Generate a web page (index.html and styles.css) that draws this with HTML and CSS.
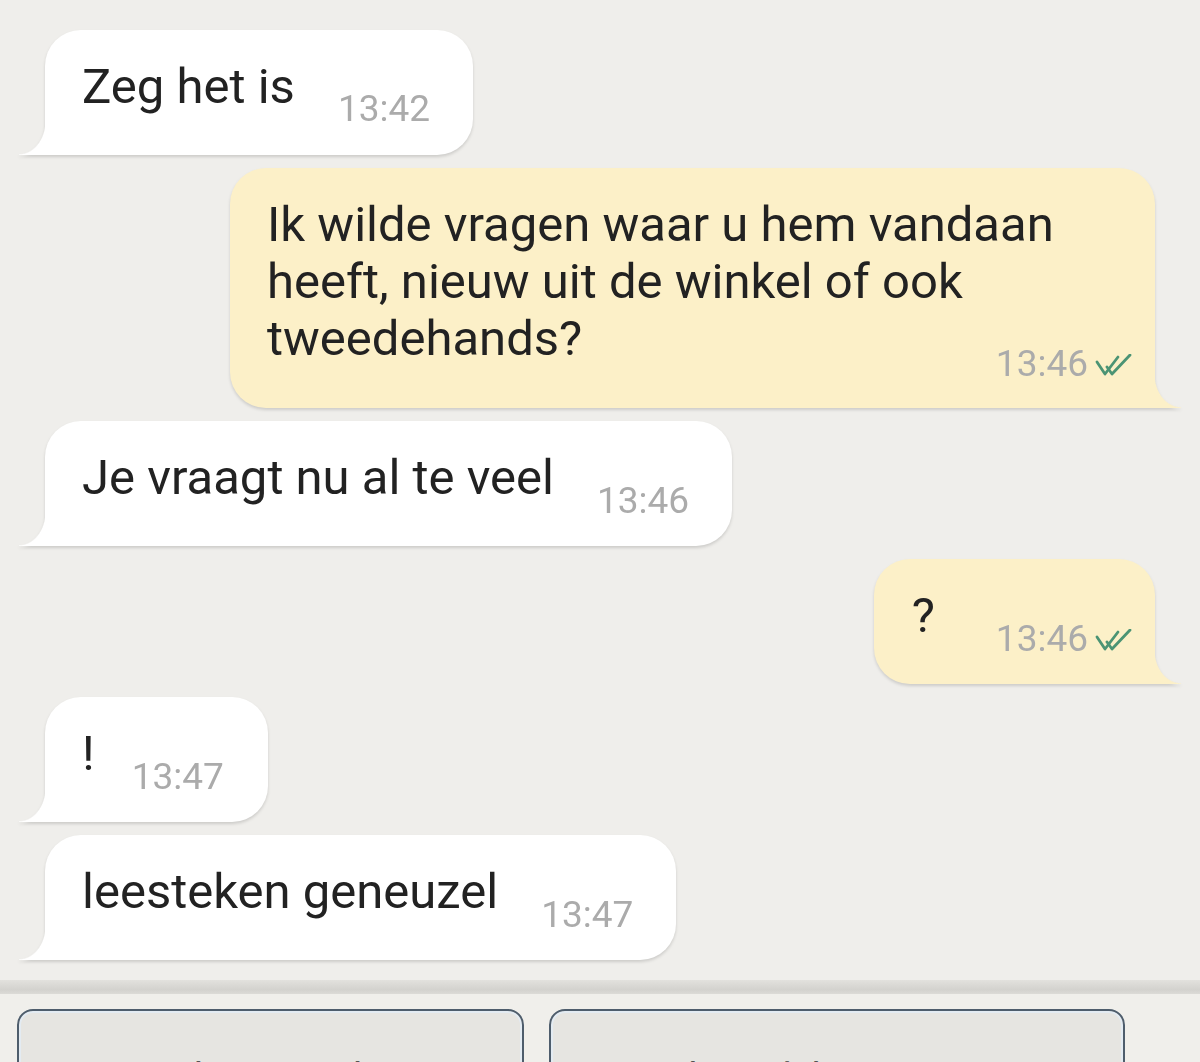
FILE: index.html
```html
<!DOCTYPE html>
<html lang="nl">
<head>
<meta charset="utf-8">
<title>Chat</title>
<link rel="stylesheet" href="styles.css">
</head>
<body>
<div class="screen">
  <main class="chat">
    <div class="bubble bubble--in">
      <span class="text">Zeg het is</span>
      <span class="time">13:42</span>
    </div>
    <div class="bubble bubble--out bubble--multi">
      <p class="text text--flow">Ik wilde vragen waar u hem vandaan heeft, nieuw uit de winkel of ook tweedehands?<span class="time time--float">13:46<svg class="ticks" viewBox="0 0 40 22" width="40" height="22" aria-hidden="true"><path d="M2 8 L10 20 L23 3" /><path d="M12 13 L17 20 L35 1" /></svg></span></p>
    </div>
    <div class="bubble bubble--in">
      <span class="text">Je vraagt nu al te veel</span>
      <span class="time">13:46</span>
    </div>
    <div class="bubble bubble--out bubble--short">
      <span class="text">?</span>
      <span class="time">13:46<svg class="ticks" viewBox="0 0 40 22" width="40" height="22" aria-hidden="true"><path d="M2 8 L10 20 L23 3" /><path d="M12 13 L17 20 L35 1" /></svg></span>
    </div>
    <div class="bubble bubble--in bubble--tiny">
      <span class="text">!</span>
      <span class="time">13:47</span>
    </div>
    <div class="bubble bubble--in">
      <span class="text">leesteken geneuzel</span>
      <span class="time">13:47</span>
    </div>
  </main>
  <div class="divider"></div>
  <footer class="replies">
    <button class="reply reply--left">Nee, dat weet ik niet</button>
    <button class="reply reply--right">Ja, dat wil ik graag weten</button>
  </footer>
</div>
</body>
</html>
```

FILE: styles.css
```css
html, body {
  margin: 0;
  padding: 0;
}

body {
  background: #efeeeb;
  font-family: Roboto, "Noto Sans", "Liberation Sans", sans-serif;
  color: #222222;
}

.screen {
  width: 1200px;
  height: 1062px;
  overflow: hidden;
  display: flex;
  flex-direction: column;
}

.chat {
  display: flex;
  flex-direction: column;
  gap: 13px;
  padding: 30px 0 0;
  height: 950px;
  box-sizing: border-box;
  flex: none;
}

.bubble {
  position: relative;
  display: flex;
  align-items: flex-end;
  gap: 43px;
  padding: 28px 43px 25.6px 37px;
  border-radius: 36px;
  filter: drop-shadow(0 2px 1.5px rgba(0, 0, 0, 0.14));
}

.bubble::before {
  content: "";
  position: absolute;
  bottom: 0;
  width: 27px;
  height: 34px;
}

.bubble--in {
  align-self: flex-start;
  margin-left: 45px;
  background: #ffffff;
  border-bottom-left-radius: 0;
}

.bubble--in::before {
  left: -26px;
  background: radial-gradient(ellipse 27px 34px at 0 0, rgba(255, 255, 255, 0) 96%, #ffffff 100%);
}

.bubble--out {
  align-self: flex-end;
  margin-right: 45px;
  background: #fcf0c8;
  border-bottom-right-radius: 0;
  padding-right: 20px;
}

.bubble--out::before {
  right: -26px;
  background: radial-gradient(ellipse 27px 34px at 100% 0, rgba(252, 240, 200, 0) 96%, #fcf0c8 100%);
}

.bubble--short {
  padding-left: 38px;
  gap: 61px;
}

.bubble--tiny {
  padding-left: 37px;
  gap: 37px;
  padding-right: 44px;
}

.text {
  font-size: 49px;
  line-height: 57px;
  margin-bottom: 14.4px;
  color: #222222;
}

.time {
  display: flex;
  align-items: center;
  font-size: 37px;
  line-height: 40px;
  color: #ababab;
  white-space: nowrap;
}

.bubble--multi {
  display: block;
  width: 925px;
  box-sizing: border-box;
  padding-bottom: 24px;
}

.bubble--multi .text--flow {
  display: flow-root;
  margin: 0;
}

.bubble--multi .time--float {
  float: right;
  margin-top: 34.4px;
}

.ticks {
  margin-left: 7px;
  margin-top: 2px;
  fill: none;
  stroke: #4b9474;
  stroke-width: 2.8;
  stroke-linecap: round;
  stroke-linejoin: round;
}

.divider {
  height: 14px;
  margin-top: 30px;
  background: linear-gradient(to bottom, #e2e1dd 0%, #d3d2ce 70%, #dcdbd7 100%);
  flex: none;
}

.replies {
  display: flex;
  gap: 25px;
  padding: 15px 0 0 17px;
  background: #f0efeb;
  flex: none;
}

.reply {
  height: 120px;
  border: 2.5px solid #4e5d6c;
  border-radius: 16px;
  background: #e6e5e1;
  box-shadow: inset 0 0 0 2px #e3ebf2;
  font-family: Roboto, "Noto Sans", "Liberation Sans", sans-serif;
  font-size: 40px;
  color: #333333;
  padding: 44px 20px 0;
  text-align: center;
  display: flex;
  justify-content: center;
  align-items: flex-start;
  flex: none;
}

.reply--left {
  width: 507px;
}

.reply--right {
  width: 576px;
}
```
